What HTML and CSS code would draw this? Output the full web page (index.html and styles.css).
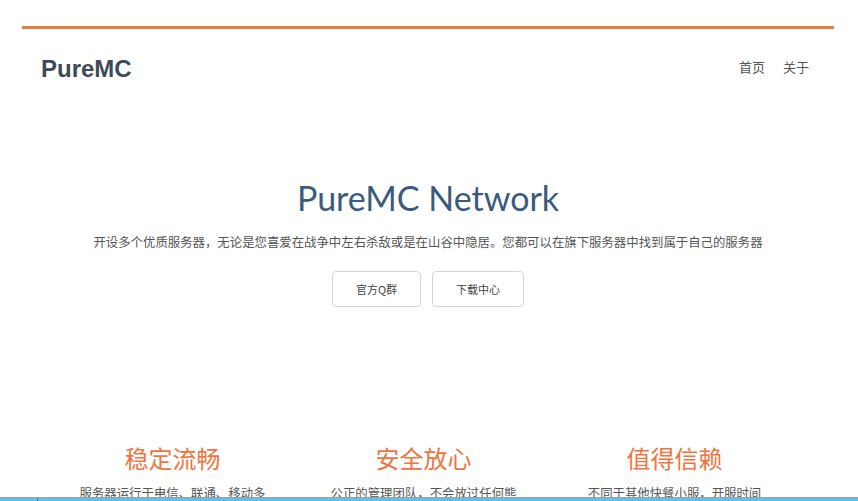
FILE: index.html
```html
<!DOCTYPE html>
<html lang="zh-CN">
<head>
<meta charset="utf-8">
<title>PureMC</title>
<link rel="stylesheet" href="styles.css">
</head>
<body>
<div class="page">
  <div class="container">
    <header class="header">
      <div class="logo">PureMC</div>
      <nav class="nav">
        <a href="#">首页</a>
        <a href="#">关于</a>
      </nav>
    </header>
    <section class="hero">
      <h1 class="title">PureMC Network</h1>
      <p class="lead">开设多个优质服务器，无论是您喜爱在战争中左右杀敌或是在山谷中隐居。您都可以在旗下服务器中找到属于自己的服务器</p>
      <div class="actions">
        <a class="btn" href="#">官方Q群</a>
        <a class="btn" href="#">下载中心</a>
      </div>
    </section>
    <section class="features">
      <div class="feature">
        <h2>稳定流畅</h2>
        <p>服务器运行于电信、联通、移动多线机房，延迟低，运行稳定</p>
      </div>
      <div class="feature">
        <h2>安全放心</h2>
        <p>公正的管理团队，不会放过任何熊孩子与作弊者</p>
      </div>
      <div class="feature">
        <h2>值得信赖</h2>
        <p>不同于其他快餐小服，开服时间长，长期稳定运营</p>
      </div>
    </section>
  </div>
</div>
<div class="taskbar"><span class="tb-start"></span></div>
</body>
</html>
```
FILE: styles.css
```css
html, body {
  margin: 0;
  padding: 0;
  background: #ffffff;
}
body {
  font-family: "Noto Sans CJK SC", "Noto Sans", sans-serif;
  color: #555;
  overflow: hidden;
  height: 501px;
}
.page {
  padding-top: 26px;
}
.container {
  width: 812px;
  margin-left: 22px;
  border-top: 3px solid #ea7a3e;
}
.header {
  display: flex;
  justify-content: space-between;
  align-items: center;
  height: 80px;
  padding: 0 25px 0 19px;
}
.logo {
  font-family: "Liberation Sans", Arial, sans-serif;
  font-weight: bold;
  font-size: 24px;
  color: #3e4a59;
}
.nav {
  display: flex;
  gap: 18px;
  margin-top: -6px;
}
.nav a {
  font-size: 13px;
  color: #555;
  text-decoration: none;
}
.hero {
  text-align: center;
  padding-top: 69px;
}
.title {
  margin: 0;
  font-family: "Lato", "Open Sans", sans-serif;
  font-weight: normal;
  font-size: 34px;
  line-height: 40px;
  color: #3b5b7e;
}
.lead {
  margin: 14px 0 0;
  font-size: 12.4px;
  line-height: 20px;
  color: #555;
}
.actions {
  display: flex;
  justify-content: center;
  gap: 11px;
  margin-top: 19px;
}
.btn {
  display: flex;
  align-items: center;
  height: 34px;
  padding: 0 23px;
  border: 1px solid #cfd5de;
  border-radius: 4px;
  font-size: 11px;
  color: #444;
  text-decoration: none;
}
.features {
  display: grid;
  grid-template-columns: repeat(3, 251px);
  margin-top: 134px;
  margin-left: 25px;
}
.feature {
  text-align: center;
}
.feature h2 {
  margin: 0;
  font-weight: normal;
  font-size: 24px;
  line-height: 34px;
  color: #ef7440;
}
.feature p {
  width: 192px;
  margin: 8px auto 0;
  font-size: 12.4px;
  line-height: 20px;
  color: #555;
}
.taskbar {
  position: fixed;
  left: 0;
  right: 0;
  bottom: 0;
  height: 3px;
  border-top: 1px solid #9aa0a6;
  background: #5cc2e6;
}
.tb-start {
  display: block;
  width: 37px;
  height: 3px;
  border-right: 1px solid #3a7a96;
}
```
